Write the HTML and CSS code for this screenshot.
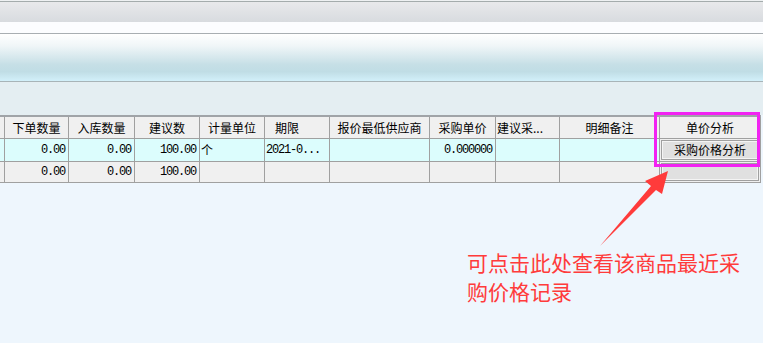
FILE: index.html
```html
<!DOCTYPE html>
<html>
<head>
<meta charset="utf-8">
<link rel="stylesheet" href="styles.css">
</head>
<body>
<div class="top-edge"></div>
<div class="title-bar"></div>
<div class="gap-bar"></div>
<div class="ribbon"></div>
<div class="toolbar"></div>
<div class="grid">
  <div class="row head">
    <div class="cell"></div>
    <div class="cell c">下单数量</div>
    <div class="cell c">入库数量</div>
    <div class="cell c">建议数</div>
    <div class="cell c">计量单位</div>
    <div class="cell l pad">期限</div>
    <div class="cell c">报价最低供应商</div>
    <div class="cell c">采购单价</div>
    <div class="cell l">建议采...</div>
    <div class="cell c">明细备注</div>
    <div class="cell c">单价分析</div>
  </div>
  <div class="row r1">
    <div class="cell"></div>
    <div class="cell num">0.00</div>
    <div class="cell num">0.00</div>
    <div class="cell num">100.00</div>
    <div class="cell l">个</div>
    <div class="cell l mono">2021-0...</div>
    <div class="cell"></div>
    <div class="cell num">0.000000</div>
    <div class="cell"></div>
    <div class="cell"></div>
    <div class="cell btn-cell"><div class="btn">采购价格分析</div></div>
  </div>
  <div class="row r2">
    <div class="cell"></div>
    <div class="cell num">0.00</div>
    <div class="cell num">0.00</div>
    <div class="cell num">100.00</div>
    <div class="cell"></div>
    <div class="cell"></div>
    <div class="cell"></div>
    <div class="cell"></div>
    <div class="cell"></div>
    <div class="cell"></div>
    <div class="cell btn-cell"><div class="btn"></div></div>
  </div>
</div>
<div class="highlight"></div>
<svg class="arrow" width="763" height="343" viewBox="0 0 763 343">
  <polygon points="668,171 645,181 651,186 600,246 656,190 662,194" fill="#ff3b3b"/>
</svg>
<div class="note">可点击此处查看该商品最近采<br>购价格记录</div>
</body>
</html>
```

FILE: styles.css
```css
html, body {
  margin: 0;
  padding: 0;
}
body {
  width: 763px;
  height: 343px;
  overflow: hidden;
  background: #eef6fd;
  font-family: "Noto Sans CJK SC", sans-serif;
  font-size: 12px;
  color: #000;
}
.top-edge {
  height: 1px;
  background: #eef1f2;
}
.title-bar {
  height: 20px;
  border-top: 1px solid #a4acac;
  box-sizing: border-box;
  height: 21px;
  background: linear-gradient(#e8e9eb, #d8dbdf);
}
.gap-bar {
  height: 11px;
  background: #fcfdff;
}
.ribbon {
  height: 49px;
  box-sizing: border-box;
  border-top: 1px solid #a8aeb2;
  border-bottom: 1px solid #a8b4b8;
  background: linear-gradient(#ffffff 0%, #f0f6f8 25%, #c6dfe6 65%, #c0dde5 80%, #d2f0fa 100%);
}
.toolbar {
  height: 33px;
  background: #e4eef2;
}
.grid {
  border-top: 2px solid #a0a4a8;
  width: 761px;
}
.row {
  display: grid;
  grid-template-columns: 5px 64px 66px 65px 65px 65px 100px 66px 64px 100px 101px;
  border-bottom: 1px solid #a0a0a0;
  box-sizing: border-box;
}
.row.head {
  height: 22px;
  background: #f0f0f0;
}
.row.r1 {
  height: 23px;
  background: #dcfdfd;
}
.row.r2 {
  height: 21px;
  background: #f0f0f0;
}
.cell {
  border-right: 1px solid #a0a0a0;
  box-sizing: border-box;
  display: flex;
  align-items: center;
  overflow: hidden;
  white-space: nowrap;
  line-height: 14px;
}
.cell.c {
  justify-content: center;
}
.cell.l {
  justify-content: flex-start;
  padding-left: 1px;
}
.cell.pad {
  padding-left: 10px;
}
.cell.num {
  justify-content: flex-end;
  padding-right: 3px;
  font-family: "Liberation Mono", monospace;
  font-size: 12px;
  letter-spacing: -1.2px;
}
.cell.mono {
  font-family: "Liberation Mono", monospace;
  font-size: 12px;
  letter-spacing: -1.2px;
}
.cell.btn-cell {
  background: #f0f0f0;
  padding: 1px 1px 1px 1px;
  align-items: stretch;
}
.btn {
  flex: 1;
  border: 1px solid #a0a0a0;
  box-shadow: inset 0 0 0 1px #f4f4f4;
  background: #e0e0e0;
  display: flex;
  align-items: center;
  justify-content: center;
}
.highlight {
  position: absolute;
  left: 654px;
  top: 112px;
  width: 106px;
  height: 55px;
  box-sizing: border-box;
  border: 3px solid #f222f2;
}
.arrow {
  position: absolute;
  left: 0;
  top: 0;
}
.note {
  position: absolute;
  left: 467px;
  top: 248px;
  font-size: 21px;
  line-height: 29px;
  color: #ff3b3b;
}
```
